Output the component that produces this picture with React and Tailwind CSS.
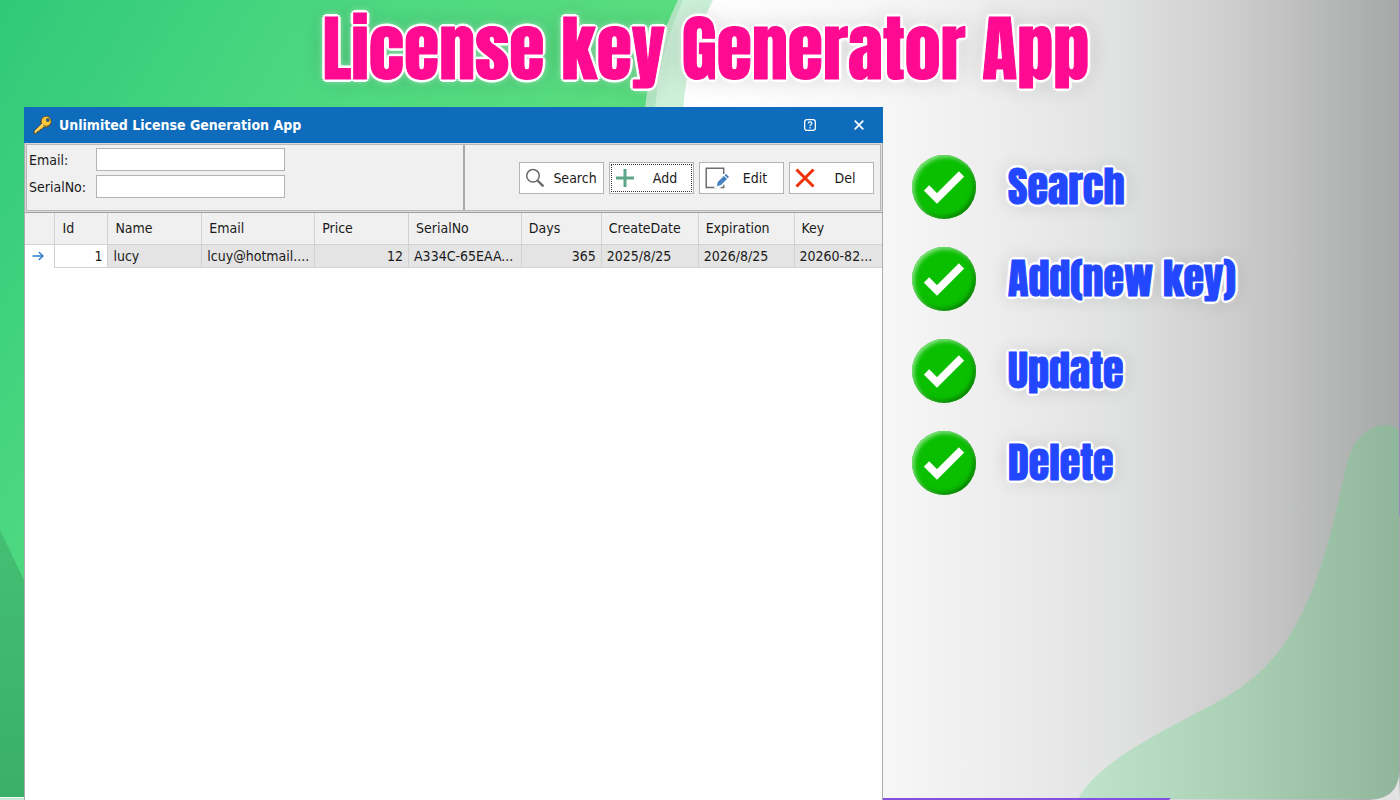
import { useState } from "react";

const columns = [
  { key: "id", label: "Id", width: 53, align: "text-right" },
  { key: "name", label: "Name", width: 94, align: "text-left" },
  { key: "email", label: "Email", width: 113, align: "text-left" },
  { key: "price", label: "Price", width: 94, align: "text-right" },
  { key: "serialNo", label: "SerialNo", width: 113, align: "text-left" },
  { key: "days", label: "Days", width: 80, align: "text-right" },
  { key: "createDate", label: "CreateDate", width: 97, align: "text-left" },
  { key: "expiration", label: "Expiration", width: 96, align: "text-left" },
  { key: "licenseKey", label: "Key", width: 88, align: "text-left" },
];

const licenses = [
  {
    id: 1,
    name: "lucy",
    email: "lcuy@hotmail....",
    price: 12,
    serialNo: "A334C-65EAA...",
    days: 365,
    createDate: "2025/8/25",
    expiration: "2026/8/25",
    licenseKey: "20260-82...",
  },
];

const features = ["Search", "Add(new key)", "Update", "Delete"];

function Backdrop() {
  return (
    <svg
      className="absolute inset-0 h-full w-full"
      viewBox="0 0 1400 800"
      preserveAspectRatio="none"
      aria-hidden="true"
    >
      <defs>
        <linearGradient id="grey" x1="0" x2="1400" y1="0" y2="0" gradientUnits="userSpaceOnUse">
          <stop offset="0.5" stopColor="#ffffff" />
          <stop offset="0.63" stopColor="#f7f7f7" />
          <stop offset="0.72" stopColor="#ececec" />
          <stop offset="0.8" stopColor="#e0e1e1" />
          <stop offset="0.88" stopColor="#cdcdcd" />
          <stop offset="0.95" stopColor="#b6b8b7" />
          <stop offset="1" stopColor="#a5a8a6" />
        </linearGradient>
        <linearGradient id="green" x1="0" x2="480" y1="0" y2="300" gradientUnits="userSpaceOnUse">
          <stop offset="0" stopColor="#2fc979" />
          <stop offset="0.55" stopColor="#4dd880" />
          <stop offset="1" stopColor="#58dc7f" />
        </linearGradient>
        <linearGradient id="leftEdge" x1="0" x2="0" y1="0" y2="1">
          <stop offset="0" stopColor="#43bf73" />
          <stop offset="1" stopColor="#3baf66" />
        </linearGradient>
        <linearGradient id="blob" x1="1078" x2="1400" y1="0" y2="0" gradientUnits="userSpaceOnUse">
          <stop offset="0" stopColor="#bfe4cb" />
          <stop offset="0.5" stopColor="#a9d0b5" />
          <stop offset="1" stopColor="#8fb59b" />
        </linearGradient>
      </defs>
      <rect width="1400" height="800" fill="url(#grey)" />
      <path d="M0 0H713C695 36 686 72 683 110V797H0Z" fill="#cdf0d8" />
      <path d="M0 0H683C667 36 658 72 655 110V797H0Z" fill="#b3e7c4" />
      <path d="M0 0H678C661 36 648 72 645 110V797H0Z" fill="url(#green)" />
      <path d="M0 530L24 580L60 655V797H0Z" fill="url(#leftEdge)" />
      <rect y="798" width="30" height="2" fill="#c9e8d3" />
      <path d="M1370 800Q1399 798 1399 770L1400 800Z" fill="#e2e2e2" />
      <path
        d="M1078 799C1096 765 1152 736 1208 707C1256 683 1279 656 1297 623C1322 577 1334 522 1345 471C1351 440 1368 425 1385 425Q1393 425 1399 430V774Q1397 797 1374 799Z"
        fill="url(#blob)"
      />
      <path d="M883 798H1171L1169 800H883Z" fill="#8450e0" />
      <rect x="1399" width="1" height="515" fill="#9c86bd" />
    </svg>
  );
}

function KeyIcon() {
  return (
    <svg className="size-5" viewBox="0 0 20 20" aria-hidden="true">
      <path
        d="M1 16.2L8.3 9A5 5.3 0 1 1 11.6 12L9.6 13.1 8.6 14.7 7.1 14.6 6.7 16.2 4.7 16.4 2.6 19 1.2 18.4Z"
        fill="#ffc93c"
        stroke="#4b4436"
        strokeWidth="1"
        strokeLinejoin="round"
      />
      <circle cx="13.2" cy="6.2" r="5" fill="#ffc93c" stroke="#4b4436" strokeWidth="0.8" />
      <path d="M2.3 16.6L10 9" stroke="#ffd96a" strokeWidth="1.6" />
      <circle cx="14.8" cy="5" r="1.6" fill="#0f6cbd" stroke="#4b4436" strokeWidth="0.8" />
    </svg>
  );
}

function SearchIcon() {
  return (
    <svg className="size-5" viewBox="0 0 20 20" fill="none" stroke="#6a6a6a" aria-hidden="true">
      <circle cx="8" cy="7.8" r="6.3" strokeWidth="1.5" />
      <path d="M12.5 12.5L18.4 18.4" strokeWidth="2.4" />
    </svg>
  );
}

function AddIcon() {
  return (
    <svg className="size-5" viewBox="0 0 20 20" stroke="#5fa58a" strokeWidth="3" aria-hidden="true">
      <path d="M10 1v18M1 10h18" />
    </svg>
  );
}

function EditIcon() {
  return (
    <svg className="h-6 w-6" viewBox="0 0 24 24" fill="none" aria-hidden="true">
      <path d="M18.7 8V2.2H1.2v19.3h17.5v-3" stroke="#6e6e6e" strokeWidth="1.5" />
      <path d="M9 22l7-12 8-4v8L14 23Z" fill="#fff" />
      <path d="M11.8 20.2l1.1-4.2 6-6 3.1 3.1-6 6z" fill="#3d7bbd" />
      <path d="M19.6 9.3l1.4-1.4 3 3-1.4 1.4z" fill="#3d7bbd" />
      <path d="M14 18.6l5-5" stroke="#7aa6d6" strokeWidth="0.7" />
    </svg>
  );
}

function DeleteIcon() {
  return (
    <svg className="size-5" viewBox="0 0 20 20" stroke="#ee3106" strokeWidth="3" aria-hidden="true">
      <path d="M1.5 1.5l17 17M18.5 1.5l-17 17" />
    </svg>
  );
}

function ToolButton({ icon, label, active, onClick }) {
  return (
    <button
      type="button"
      onClick={onClick}
      className="flex h-8 w-[85px] items-center border border-[#b4b4b4] bg-white p-px"
    >
      <span
        className={
          active
            ? "flex h-full w-full items-center border border-dotted border-[#333] pl-[3px]"
            : "flex h-full w-full items-center border border-transparent pl-[3px]"
        }
      >
        <span className="flex w-6 shrink-0">{icon}</span>
        <span className="flex-1 text-center">{label}</span>
      </span>
    </button>
  );
}

function TitleBar() {
  return (
    <div className="flex h-9 items-center bg-[#0f6cbd] pl-[9px] text-white">
      <KeyIcon />
      <h2 className="ml-[6px] flex-1 font-bold">Unlimited License Generation App</h2>
      <button type="button" aria-label="Help" className="flex h-full w-[50px] items-center justify-center">
        <svg className="size-3" viewBox="0 0 13 13" fill="none" stroke="white" aria-hidden="true">
          <rect x="0.7" y="0.7" width="11.6" height="11.6" rx="2.5" strokeWidth="1.4" />
          <path d="M4.6 4.9c0-2.4 3.9-2.3 3.9-.2 0 1.5-2 1.5-2 3.1M6.5 8.8v1.4" strokeWidth="1.3" />
        </svg>
      </button>
      <button type="button" aria-label="Close" className="flex h-full w-12 items-center justify-center">
        <svg className="size-[10px]" viewBox="0 0 11 11" stroke="white" strokeWidth="1.9" aria-hidden="true">
          <path d="M0.8 0.8l9.4 9.4M10.2 0.8L0.8 10.2" />
        </svg>
      </button>
    </div>
  );
}

function Toolbar() {
  const [email, setEmail] = useState("");
  const [serialNo, setSerialNo] = useState("");
  const [active, setActive] = useState("Add");

  return (
    <div className="border-b border-[#a0a0a0] bg-[#f0f0f0] px-px pt-px pb-px">
      <div className="flex border border-[#b8b8b8] shadow-[0_0_0_1px_#dadada]">
        <div className="flex w-[438px] flex-col gap-1 border-r-2 border-[#a9a9a9] pt-[3px] pb-3 pl-[2px]">
          <div className="flex items-center">
            <label htmlFor="email" className="w-[67px]">Email:</label>
            <input
              id="email"
              value={email}
              onChange={(e) => setEmail(e.target.value)}
              className="h-[23px] w-[189px] border border-[#b4b4b4] bg-white px-1 outline-none"
            />
          </div>
          <div className="flex items-center">
            <label htmlFor="serialNo" className="w-[67px]">SerialNo:</label>
            <input
              id="serialNo"
              value={serialNo}
              onChange={(e) => setSerialNo(e.target.value)}
              className="h-[23px] w-[189px] border border-[#b4b4b4] bg-white px-1 outline-none"
            />
          </div>
        </div>
        <div className="flex flex-1 items-center justify-end gap-[5px] pr-[6px]">
          <ToolButton icon={<SearchIcon />} label="Search" active={active === "Search"} onClick={() => setActive("Search")} />
          <ToolButton icon={<AddIcon />} label="Add" active={active === "Add"} onClick={() => setActive("Add")} />
          <ToolButton icon={<EditIcon />} label="Edit" active={active === "Edit"} onClick={() => setActive("Edit")} />
          <ToolButton icon={<DeleteIcon />} label="Del" active={active === "Del"} onClick={() => setActive("Del")} />
        </div>
      </div>
    </div>
  );
}

function LicenseTable() {
  return (
    <table className="w-full table-fixed border-collapse">
      <colgroup>
        <col style={{ width: `${(30 / 858) * 100}%` }} />
        {columns.map((column) => (
          <col key={column.key} style={{ width: `${(column.width / 858) * 100}%` }} />
        ))}
      </colgroup>
      <thead>
        <tr className="h-[31px] bg-[#f0f0f0]">
          <th className="border-r border-b border-[#d2d2d2]"></th>
          {columns.map((column) => (
            <th
              key={column.key}
              className="border-r border-b border-[#d2d2d2] pl-[7px] text-left font-normal whitespace-nowrap last:border-r-0"
            >
              {column.label}
            </th>
          ))}
        </tr>
      </thead>
      <tbody>
        {licenses.map((license) => (
          <tr key={license.id} className="h-[23px] bg-[#e4e4e4]">
            <td className="border-r border-[#d2d2d2] bg-white pr-1">
              <svg className="mx-auto h-[10px] w-3" viewBox="0 0 12 10" fill="none" stroke="#2b7cc4" strokeWidth="1.3" aria-hidden="true">
                <path d="M0.5 5h10.5M6.8 1l4.2 4-4.2 4" />
              </svg>
            </td>
            {columns.map((column) => (
              <td
                key={column.key}
                className={`border-r border-b border-[#d2d2d2] px-[5px] whitespace-nowrap last:border-r-0 ${column.align} ${column.key === "id" ? "bg-white" : ""}`}
              >
                {license[column.key]}
              </td>
            ))}
          </tr>
        ))}
      </tbody>
    </table>
  );
}

function CheckBadge() {
  return (
    <span className="flex size-16 shrink-0 items-center justify-center rounded-full bg-[#0abf00] shadow-[inset_2px_2px_4px_#8fe68b,inset_-2px_-2px_4px_#067a00]">
      <svg className="h-9 w-10" viewBox="0 0 40 36" fill="none" aria-hidden="true">
        <path d="M2.5 19L13 29.5L37.5 5" stroke="white" strokeWidth="7.5" />
      </svg>
    </span>
  );
}

function App() {
  return (
    <div className="relative flex min-h-screen flex-col overflow-hidden font-['DejaVu_Sans_Condensed','Noto_Sans',sans-serif] text-sm text-[#1a1a1a]">
      <Backdrop />
      <h1 className="relative flex h-[107px] items-start justify-center pt-1 pl-3 font-['Impact','Anton','Liberation_Sans_Narrow',sans-serif] text-[72px] leading-[90px] font-normal whitespace-nowrap text-[#ff0a91] [-webkit-text-stroke:1px_#ff0a91] [text-shadow:3px_0_#fff,-3px_0_#fff,0_3px_#fff,0_-3px_#fff,2px_2px_#fff,-2px_2px_#fff,2px_-2px_#fff,-2px_-2px_#fff,0_0_8px_#fff,0_0_24px_#0003]">
        License key Generator App
      </h1>
      <main className="relative grid flex-1 grid-cols-[859fr_517fr] pl-6">
        <section className="flex flex-col bg-white">
          <TitleBar />
          <div className="flex-1 border-x border-[#ababab]">
            <Toolbar />
            <LicenseTable />
          </div>
        </section>
        <ul className="flex flex-col gap-7 pt-12 pl-[29px]">
          {features.map((feature) => (
            <li key={feature} className="flex items-center gap-8">
              <CheckBadge />
              <span className="font-['Impact','Anton','Liberation_Sans_Narrow',sans-serif] text-[42px] leading-none font-normal whitespace-nowrap text-[#2347ff] [-webkit-text-stroke:1px_#2347ff] [text-shadow:3px_0_#fff,-3px_0_#fff,0_3px_#fff,0_-3px_#fff,2px_2px_#fff,-2px_2px_#fff,2px_-2px_#fff,-2px_-2px_#fff,0_0_6px_#fff,0_0_20px_#0003]">
                {feature}
              </span>
            </li>
          ))}
        </ul>
      </main>
    </div>
  );
}

export default App;
